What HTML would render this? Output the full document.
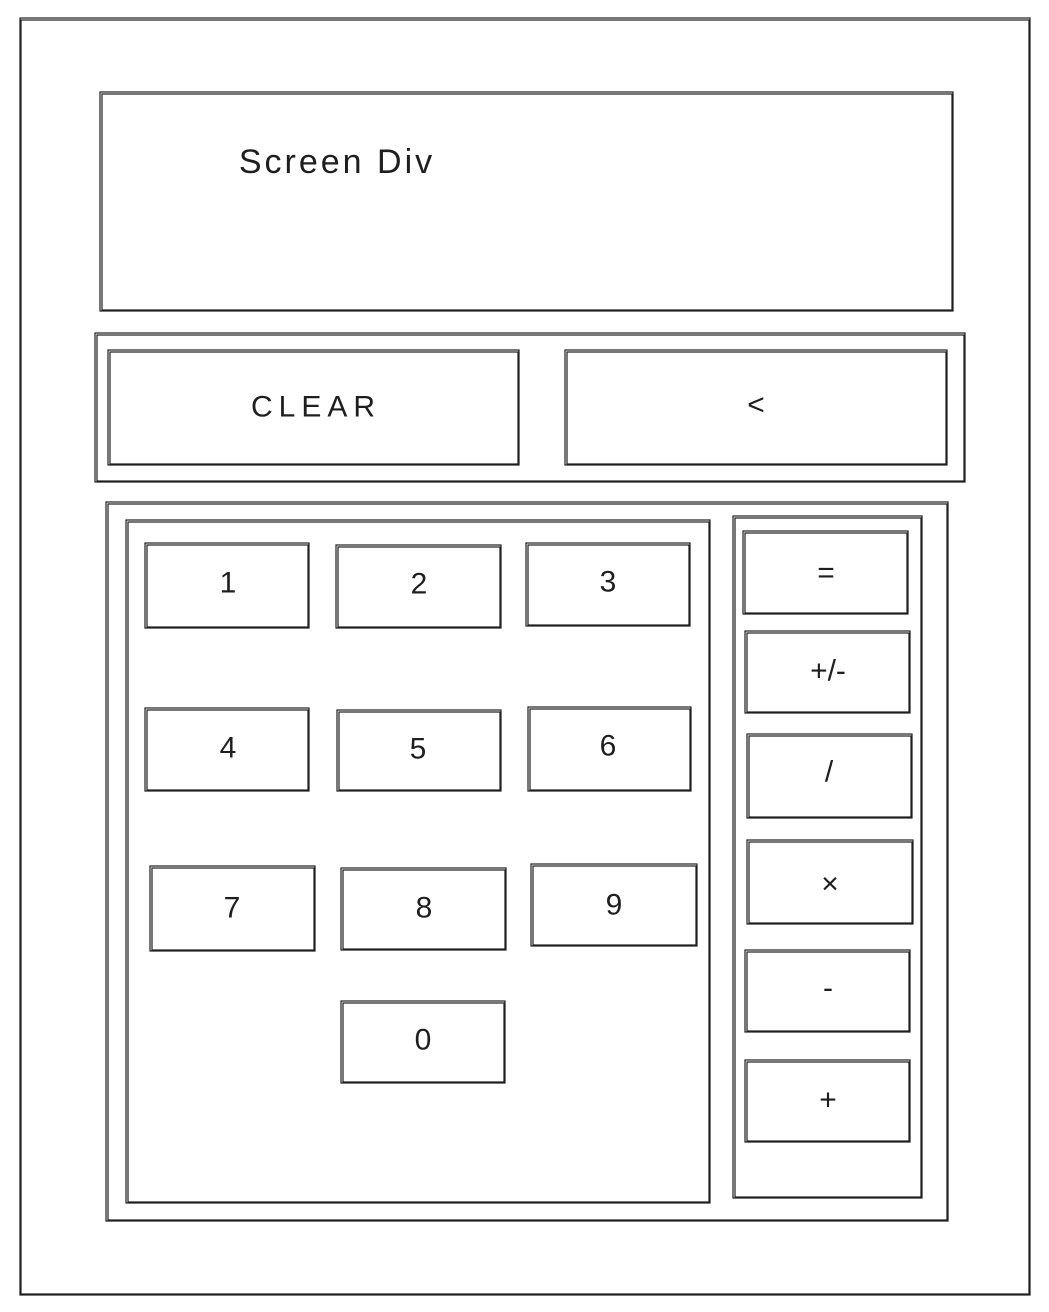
<!DOCTYPE html>
<html><head><meta charset="utf-8"><style>
html,body{margin:0;padding:0;background:#fff;}
svg{display:block}
text{font-family:"Liberation Sans","DejaVu Sans",sans-serif;fill:#1e1e1e;text-anchor:middle;dominant-baseline:central}
rect{fill:none;stroke:#1e1e1e;stroke-width:1.2}
</style></head><body>
<svg width="1049" height="1312" viewBox="0 0 1049 1312" xmlns="http://www.w3.org/2000/svg">
<g>
<rect x="20" y="18" width="1010" height="1277"/><rect x="21" y="20" width="1008" height="1274" stroke-width="0.7"/>
<rect x="100" y="92" width="853" height="219"/><rect x="102" y="94" width="850" height="216" stroke-width="0.7"/>
<rect x="95" y="333" width="870" height="149"/><rect x="97" y="335" width="867" height="146" stroke-width="0.7"/>
<rect x="108" y="350" width="411" height="115"/><rect x="110" y="352" width="408" height="112" stroke-width="0.7"/>
<rect x="565" y="350" width="382" height="115"/><rect x="567" y="352" width="379" height="112" stroke-width="0.7"/>
<rect x="106" y="502" width="842" height="719"/><rect x="108" y="504" width="839" height="716" stroke-width="0.7"/>
<rect x="126" y="520" width="584" height="683"/><rect x="128" y="522" width="581" height="680" stroke-width="0.7"/>
<rect x="733" y="516" width="189" height="682"/><rect x="735" y="518" width="186" height="679" stroke-width="0.7"/>
</g>
<g>
<rect x="145" y="543" width="164" height="85"/><rect x="147" y="545" width="161" height="82" stroke-width="0.7"/>
<rect x="336" y="545" width="165" height="83"/><rect x="338" y="547" width="162" height="80" stroke-width="0.7"/>
<rect x="526" y="543" width="164" height="83"/><rect x="528" y="545" width="161" height="80" stroke-width="0.7"/>
<rect x="145" y="708" width="164" height="83"/><rect x="147" y="710" width="161" height="80" stroke-width="0.7"/>
<rect x="337" y="710" width="164" height="81"/><rect x="339" y="712" width="161" height="78" stroke-width="0.7"/>
<rect x="528" y="707" width="163" height="84"/><rect x="530" y="709" width="160" height="81" stroke-width="0.7"/>
<rect x="150" y="866" width="165" height="85"/><rect x="152" y="868" width="162" height="82" stroke-width="0.7"/>
<rect x="341" y="868" width="165" height="82"/><rect x="343" y="870" width="162" height="79" stroke-width="0.7"/>
<rect x="531" y="864" width="166" height="82"/><rect x="533" y="866" width="163" height="79" stroke-width="0.7"/>
<rect x="341" y="1001" width="164" height="82"/><rect x="343" y="1003" width="161" height="79" stroke-width="0.7"/>
<rect x="743" y="531" width="165" height="83"/><rect x="745" y="533" width="162" height="80" stroke-width="0.7"/>
<rect x="745" y="631" width="165" height="82"/><rect x="747" y="633" width="162" height="79" stroke-width="0.7"/>
<rect x="747" y="734" width="165" height="84"/><rect x="749" y="736" width="162" height="81" stroke-width="0.7"/>
<rect x="747" y="840" width="166" height="84"/><rect x="749" y="842" width="163" height="81" stroke-width="0.7"/>
<rect x="745" y="950" width="165" height="82"/><rect x="747" y="952" width="162" height="79" stroke-width="0.7"/>
<rect x="745" y="1060" width="165" height="82"/><rect x="747" y="1062" width="162" height="79" stroke-width="0.7"/>
</g>
<g font-size="30">
<text x="337" y="162" font-size="34" letter-spacing="3">Screen Div</text>
<text x="316" y="407" letter-spacing="6">CLEAR</text>
<text x="756" y="405">&lt;</text>
<text x="228" y="583">1</text><text x="419" y="584">2</text><text x="608" y="582">3</text>
<text x="228" y="748">4</text><text x="418" y="749">5</text><text x="608" y="746">6</text>
<text x="232" y="908">7</text><text x="424" y="908">8</text><text x="614" y="905">9</text>
<text x="423" y="1040">0</text>
<text x="826" y="573">=</text><text x="828" y="671">+/-</text><text x="829" y="772">/</text>
<text x="830" y="884">×</text><text x="828" y="988">-</text><text x="828" y="1100">+</text>
</g>
</svg>
</body></html>
